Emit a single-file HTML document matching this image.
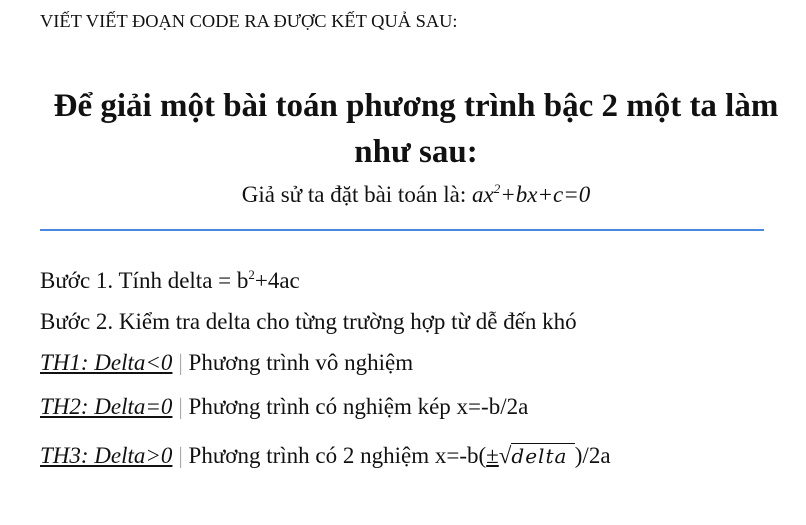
<!DOCTYPE html>
<html><head><meta charset="utf-8"><style>
body{margin:0;background:#fff;font-family:"Liberation Serif",serif;color:#111;width:806px;height:525px;overflow:hidden;position:relative}
.a{position:absolute;white-space:nowrap}
.h{left:40px;top:11px;font-size:18.4px}
.t{left:40px;width:752px;top:83px;text-align:center;font-weight:bold;font-size:33px;line-height:46px}
.s{left:40px;width:752px;top:181px;text-align:center;font-size:23px}
.hr{position:absolute;left:40px;top:229px;width:724px;height:2px;background:#4a87e0}
.b{left:40px;font-size:23px}
u{font-style:italic}
.sep{color:#aaa}
sup{font-size:13px;vertical-align:9px}
</style></head><body>
<div class="a h">VIẾT VIẾT ĐOẠN CODE RA ĐƯỢC KẾT QUẢ SAU:</div>
<div class="a t">Để giải một bài toán phương trình bậc 2 một ta làm<br>như sau:</div>
<div class="a s">Giả sử ta đặt bài toán là: <i>ax<sup>2</sup>+bx+c=0</i></div>
<div class="hr"></div>
<div class="a b" style="top:267px">Bước 1. Tính delta = b<sup>2</sup>+4ac</div>
<div class="a b" style="top:309px">Bước 2. Kiểm tra delta cho từng trường hợp từ dễ đến khó</div>
<div class="a b" style="top:350px"><u>TH1: Delta&lt;0</u> <span class="sep">|</span> Phương trình vô nghiệm</div>
<div class="a b" style="top:394px"><u>TH2: Delta=0</u> <span class="sep">|</span> Phương trình có nghiệm kép x=-b/2a</div>
<div class="a b" style="top:443px"><u>TH3: Delta&gt;0</u> <span class="sep">|</span> Phương trình có 2 nghiệm x=-b(<u style="font-style:normal">±</u>√<span style="border-top:1px solid #111;font-style:italic;font-family:'DejaVu Serif',serif;font-size:20px;letter-spacing:1px">delta </span>)/2a</div>
</body></html>
